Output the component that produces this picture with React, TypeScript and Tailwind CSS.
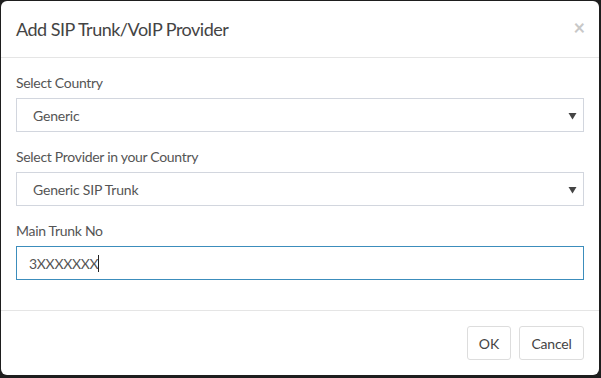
import React from "react";

function SelectBox({ value }: { value: string }) {
  return (
    <div className="relative flex h-[34px] items-center border border-[#d2d6de] bg-white pl-[16px] text-[14px] tracking-[-0.2px] text-[#555]">
      <span>{value}</span>
      <svg className="absolute right-[6px] top-[13px]" width="9" height="8" viewBox="0 0 9 8">
        <path d="M0.5 1 L8.5 1 L4.5 7.5 Z" fill="#444" />
      </svg>
    </div>
  );
}

export default function App() {
  return (
    <div
      className="h-[378px] w-[601px] bg-[#1e1e1e] pl-[1px] pt-[1px]"
      style={{ fontFamily: "Lato, 'Open Sans', sans-serif" }}
    >
      <div className="flex h-[374px] w-[598px] flex-col rounded-[6px] bg-white">
        <div className="flex items-center justify-between border-b border-[#e5e5e5] px-[15px] pb-[15px] pt-[15px]">
          <h4 className="text-[18px] leading-[26px] tracking-[-0.5px] text-[#444]">Add SIP Trunk/VoIP Provider</h4>
          <span className="mr-[-1px] mt-[-5px] text-[20px] font-bold leading-none text-[#c8c8c8]">×</span>
        </div>
        <div className="flex flex-col px-[15px] pb-[15px] pt-[15px]">
          <div className="mb-[15px] flex flex-col">
            <label className="mb-[5px] h-[20px] text-[14px] leading-[20px] tracking-[-0.3px] text-[#555]">Select Country</label>
            <SelectBox value="Generic" />
          </div>
          <div className="mb-[15px] flex flex-col">
            <label className="mb-[5px] h-[20px] text-[14px] leading-[20px] tracking-[-0.3px] text-[#555]">
              Select Provider in your Country
            </label>
            <SelectBox value="Generic SIP Trunk" />
          </div>
          <div className="mb-[15px] flex flex-col">
            <label className="mb-[5px] h-[20px] text-[14px] leading-[20px] tracking-[-0.3px] text-[#555]">Main Trunk No</label>
            <div className="flex h-[34px] items-center border border-[#3c8dbc] bg-white pl-[12px] text-[14px] tracking-[-0.3px] text-[#555]">
              <span>3XXXXXXX</span>
              <span className="h-[17px] w-[1px] bg-[#222]" />
            </div>
          </div>
        </div>
        <div className="flex justify-end gap-[8px] border-t border-[#e5e5e5] px-[15px] pt-[15px]">
          <button className="h-[34px] w-[44px] rounded-[3px] border border-[#ddd] bg-white text-[14px] text-[#444]">
            OK
          </button>
          <button className="h-[34px] w-[65px] rounded-[3px] border border-[#ddd] bg-white text-[14px] tracking-[-0.2px] text-[#444]">
            Cancel
          </button>
        </div>
      </div>
    </div>
  );
}
